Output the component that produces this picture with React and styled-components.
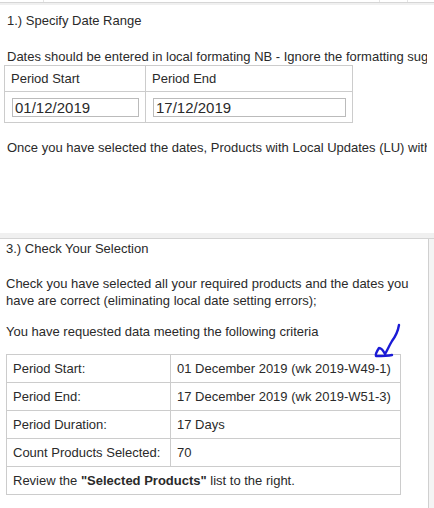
import React from 'react';
import styled, { createGlobalStyle } from 'styled-components';

const GlobalStyle = createGlobalStyle`
  html, body {
    margin: 0;
    padding: 0;
    background: #ffffff;
    font-family: "Liberation Sans", Arial, sans-serif;
    font-size: 13px;
    color: #2a2a2a;
  }
`;

// top strip: bottom of the table above
const TopStrip = styled.div`
  height: 2px;
  display: flex;
  border-bottom: 1px solid #d6d6d6;
`;

const StripCell = styled.div`
  width: ${({ w }) => w}px;
  border-right: 1px solid #e4e4e4;
`;

const StripBand = styled.div`
  height: 2px;
  background: #f0f0f0;
`;

const Section = styled.div`
  padding: 8px 7px 0 7px;
`;

const Title = styled.div`
  font-size: 13px;
  line-height: 15px;
  margin: 0 0 20px 0;
`;

const Para = styled.p`
  margin: 0;
  line-height: 17px;
  white-space: ${({ nowrap }) => (nowrap ? 'nowrap' : 'normal')};
  overflow: hidden;
`;

const DateTable = styled.table`
  border-collapse: collapse;
  margin-left: -3px;
  width: 347px;
  font-size: 13px;
  color: #2a2a2a;

  td {
    border: 1px solid #cccccc;
    padding: 0 6px;
    vertical-align: middle;
  }
`;

const HeadRow = styled.tr`
  height: 26px;
`;

const InputRow = styled.tr`
  height: 31px;
`;

const DateInput = styled.input`
  font-family: "Liberation Sans", Arial, sans-serif;
  font-size: 15px;
  color: #2a2a2a;
  border: 1px solid #bbbbbb;
  padding: 0 2px;
  height: 17px;
  width: ${({ w }) => w}px;
  box-sizing: content-box;
  margin-left: ${({ ml }) => ml}px;
  outline: none;
`;

const Gap = styled.div`
  height: ${({ h }) => h}px;
`;

const Band = styled.div`
  height: 5px;
  background: #f0f0f0;
  border-bottom: 1px solid #d4d4d4;
`;

const Outer = styled.div`
  display: flex;
  background: #f4f4f4;
`;

const Panel = styled.div`
  width: 429px;
  background: #fff;
  border-right: 1px solid #d0d0d0;
  padding: 2px 6px 13px 6px;
  box-sizing: border-box;
  position: relative;
`;

const PanelTitle = styled.div`
  line-height: 16px;
  margin: 0 0 18px 0;
`;

const Criteria = styled.p`
  margin: 0 0 ${({ mb }) => mb}px 0;
  line-height: 17px;
`;

const Mark = styled.svg`
  position: absolute;
  left: 373px;
  top: 84px;
`;

const InfoTable = styled.table`
  border-collapse: collapse;
  width: 395px;
  font-size: 13px;
  color: #2a2a2a;

  td {
    border: 1px solid #cccccc;
    padding: 0 6px;
    height: 27px;
    vertical-align: middle;
    white-space: nowrap;
  }
`;

const LabelCell = styled.td`
  width: 151px;
`;

const App = () => (
  <>
    <GlobalStyle />
    <TopStrip>
      <StripCell w={43} />
      <StripCell w={335} />
      <StripCell w={27} />
    </TopStrip>
    <StripBand />
    <Section>
      <Title>1.) Specify Date Range</Title>
      <Para nowrap>Dates should be entered in local formating NB - Ignore the formatting suggestions</Para>
      <DateTable>
        <tbody>
          <HeadRow>
            <td style={{ width: 128 }}>Period Start</td>
            <td>Period End</td>
          </HeadRow>
          <InputRow>
            <td>
              <DateInput w={121} ml={1} defaultValue="01/12/2019" />
            </td>
            <td>
              <DateInput w={187} ml={1} defaultValue="17/12/2019" />
            </td>
          </InputRow>
        </tbody>
      </DateTable>
      <Gap h={16} />
      <Para nowrap>Once you have selected the dates, Products with Local Updates (LU) within the period will be shown</Para>
      <Gap h={77} />
    </Section>
    <Band />
    <Outer>
      <Panel>
        <PanelTitle>3.) Check Your Selection</PanelTitle>
        <Criteria mb={14}>
          Check you have selected all your required products and the dates you have are correct (eliminating local date setting errors);
        </Criteria>
        <Criteria mb={14}>You have requested data meeting the following criteria</Criteria>
        <Mark width="30" height="36" viewBox="0 0 30 36">
          <path
            d="M26 2 C25 8 22 14 19 18 C16 23 14 28 12 31 C10 27 8 25 6 25 C4 28 2 31 3 33 C8 33 14 33 19 32"
            fill="none"
            stroke="#1a1ad6"
            strokeWidth="2.4"
            strokeLinecap="round"
            strokeLinejoin="round"
          />
        </Mark>
        <InfoTable>
          <tbody>
            <tr>
              <LabelCell>Period Start:</LabelCell>
              <td>01 December 2019 (wk 2019-W49-1)</td>
            </tr>
            <tr>
              <LabelCell>Period End:</LabelCell>
              <td>17 December 2019 (wk 2019-W51-3)</td>
            </tr>
            <tr>
              <LabelCell>Period Duration:</LabelCell>
              <td>17 Days</td>
            </tr>
            <tr>
              <LabelCell>Count Products Selected:</LabelCell>
              <td>70</td>
            </tr>
            <tr>
              <td colSpan={2}>
                Review the <b>"Selected Products"</b> list to the right.
              </td>
            </tr>
          </tbody>
        </InfoTable>
      </Panel>
    </Outer>
  </>
);

export default App;
